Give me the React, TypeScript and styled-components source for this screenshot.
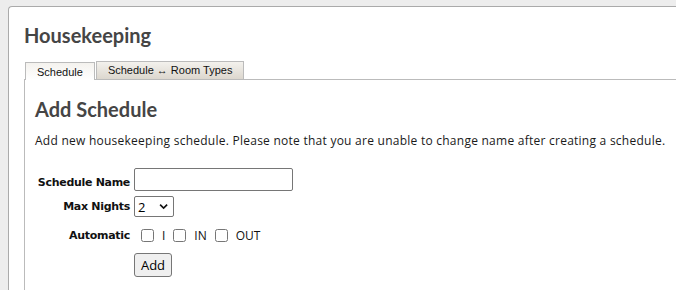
import { useState } from "react";
import styled, { createGlobalStyle } from "styled-components";

const GlobalStyle = createGlobalStyle`
  body {
    margin: 0;
    background: #ededed;
    font-family: "Open Sans", "DejaVu Sans", sans-serif;
    color: #222;
  }
`;

const tabs = ["Schedule", "Schedule \u2194 Room Types"];
const channels = ["I", "IN", "OUT"];

const Chevron = () => (
  <svg width="10" height="7" viewBox="0 0 10 7">
    <path d="M1.2 1.5 L5 5.2 L8.8 1.5" fill="none" stroke="#111" strokeWidth="1.8" />
  </svg>
);

const App = () => {
  const [active, setActive] = useState(0);
  const [nights, setNights] = useState("2");

  return (
    <>
      <GlobalStyle />
      <Page>
        <Panel>
          <Title>Housekeeping</Title>
          <TabBar>
            {tabs.map((t, i) => (
              <Tab key={t} $active={i === active} onClick={() => setActive(i)}>
                {t}
              </Tab>
            ))}
          </TabBar>
          <TabBody>
            <Heading>Add Schedule</Heading>
            <Note>
              Add new housekeeping schedule. Please note that you are unable to change name after creating a schedule.
            </Note>
            <Form>
              <Label>Schedule Name</Label>
              <TextInput type="text" />
              <Label>Max Nights</Label>
              <Field>
                <SelectBox>
                  <Select value={nights} onChange={(e) => setNights(e.target.value)}>
                    {[1, 2, 3, 4, 5, 6, 7].map((n) => (
                      <option key={n}>{n}</option>
                    ))}
                  </Select>
                  <Chevron />
                </SelectBox>
              </Field>
              <Label>Automatic</Label>
              <Checks>
                {channels.map((c) => (
                  <Check key={c}>
                    <input type="checkbox" />
                    {c}
                  </Check>
                ))}
              </Checks>
              <span />
              <Field>
                <Button>Add</Button>
              </Field>
            </Form>
          </TabBody>
        </Panel>
      </Page>
    </>
  );
};

export default App;

const Page = styled.div`
  padding: 6px 0 0 8px;
  height: 284px;
  overflow: hidden;
`;

const Panel = styled.div`
  background: #fff;
  border: 1px solid #aaa;
  border-right: none;
  border-bottom: none;
  border-top-left-radius: 4px;
  padding: 17px 0 0 15px;
  min-height: 300px;
`;

const Title = styled.h1`
  margin: 0 0 15px;
  font-family: Lato, "Open Sans", sans-serif;
  font-size: 20px;
  font-weight: bold;
  color: #454545;
  line-height: 22px;
`;

const TabBar = styled.div`
  display: flex;
  align-items: flex-end;
  gap: 1px;
  padding-left: 1px;
`;

const Tab = styled.div<{ $active: boolean }>`
  font-family: "Liberation Sans", Arial, sans-serif;
  font-size: 11px;
  color: #111;
  border: 1px solid #bbb;
  border-bottom: none;
  height: 17px;
  line-height: ${(p) => (p.$active ? "19px" : "16px")};
  padding: 0 11px;
  margin-bottom: ${(p) => (p.$active ? "-1px" : "0")};
  position: relative;
  cursor: pointer;
  background: ${(p) =>
    p.$active
      ? "linear-gradient(#f4f2ee, #fff)"
      : "linear-gradient(#f3f1ed, #dcd7ce)"};
`;

const TabBody = styled.div`
  border-top: 1px solid #bbb;
  border-left: 1px solid #bbb;
  padding: 18px 0 40px 10px;
`;

const Heading = styled.h2`
  margin: 0 0 13px;
  font-family: Lato, "Open Sans", sans-serif;
  font-size: 20px;
  font-weight: bold;
  color: #454545;
  line-height: 22px;
`;

const Note = styled.p`
  margin: 0 0 19px;
  font-size: 12px;
  letter-spacing: 0.25px;
  line-height: 16px;
  white-space: nowrap;
  color: #1a1a1a;
`;

const Form = styled.div`
  display: grid;
  grid-template-columns: 95px auto;
  justify-content: start;
  column-gap: 4px;
  align-items: center;
`;

const Label = styled.div`
  text-align: right;
  white-space: nowrap;
  font-family: "DejaVu Sans", Tahoma, sans-serif;
  font-weight: bold;
  font-size: 11px;
  letter-spacing: -0.3px;
  color: #111;
`;

const Field = styled.div`
  display: flex;
  align-items: center;
`;

const TextInput = styled.input`
  width: 159px;
  height: 23px;
  box-sizing: border-box;
  border: 1px solid #767676;
  border-radius: 2px;
  padding: 1px 2px;
  margin: 0 0 5px;
  font-size: 13px;
`;

const SelectBox = styled.label`
  display: flex;
  align-items: center;
  gap: 6px;
  width: 40px;
  height: 21px;
  box-sizing: border-box;
  border: 1px solid #767676;
  border-radius: 2px;
  padding: 0 5px 0 3px;
  background: #fff;
`;

const Select = styled.select`
  appearance: none;
  border: none;
  outline: none;
  background: transparent;
  padding: 0;
  width: 16px;
  font-family: "Open Sans", "Liberation Sans", sans-serif;
  font-size: 13px;
  color: #000;
`;

const Checks = styled.div`
  display: flex;
  align-items: center;
  gap: 8px;
  padding-left: 7px;
  height: 36px;
`;

const Check = styled.label`
  display: flex;
  align-items: center;
  gap: 8px;
  font-family: "Open Sans", "Liberation Sans", sans-serif;
  font-size: 12px;
  color: #111;

  input {
    margin: 0;
    width: 13px;
    height: 13px;
  }
`;

const Button = styled.button`
  width: 38px;
  height: 24px;
  border: 1px solid #767676;
  border-radius: 3px;
  background: #efefef;
  font-family: "Open Sans", "Liberation Sans", sans-serif;
  font-size: 13px;
  color: #000;
  padding: 0;
`;
